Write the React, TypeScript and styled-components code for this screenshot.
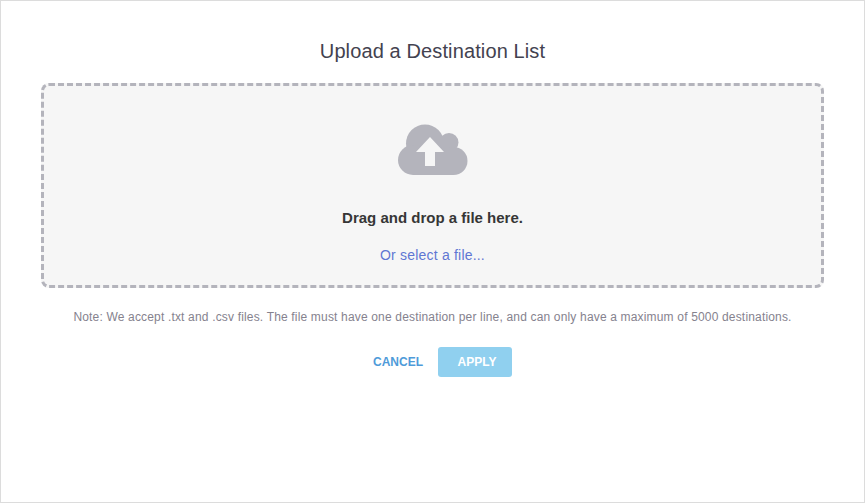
import React from 'react';
import styled, { createGlobalStyle } from 'styled-components';

const GlobalStyle = createGlobalStyle`
  html, body {
    margin: 0;
    padding: 0;
    background: #fff;
    font-family: "Liberation Sans", Arial, sans-serif;
  }
`;

const Modal = styled.div`
  box-sizing: border-box;
  width: 865px;
  height: 503px;
  border: 1px solid #dcdcdc;
  padding: 38px 40px 0;
  display: flex;
  flex-direction: column;
  align-items: center;
  background: #fff;
`;

const Title = styled.h1`
  margin: 0;
  font-size: 20px;
  line-height: 24px;
  font-weight: 400;
  letter-spacing: 0.12px;
  color: #43424f;
`;

const DropZone = styled.div`
  box-sizing: border-box;
  width: 783px;
  height: 205px;
  margin-top: 20px;
  border: 3px dashed #b4b4bc;
  border-radius: 8px;
  background: #f6f6f6;
  padding-top: 38px;
  display: flex;
  flex-direction: column;
  align-items: center;
`;

const CloudIcon = styled.svg`
  display: block;
  width: 70px;
  height: 51px;
`;

const DropText = styled.div`
  margin-top: 34px;
  font-size: 15px;
  line-height: 18px;
  font-weight: 700;
  color: #363636;
`;

const SelectLink = styled.a`
  margin-top: 19px;
  font-size: 14px;
  line-height: 18px;
  letter-spacing: 0.2px;
  color: #5f76d3;
  cursor: pointer;
`;

const Note = styled.p`
  margin: 21px 0 0;
  font-size: 12px;
  line-height: 16px;
  letter-spacing: 0.17px;
  color: #85828e;
`;

const Actions = styled.div`
  margin: 22px 0 0 20px;
  display: flex;
  align-items: center;
  gap: 15px;
`;

const ActionButton = styled.button<{ $primary?: boolean }>`
  box-sizing: border-box;
  width: ${p => (p.$primary ? '74px' : 'auto')};
  height: 30px;
  padding: ${p => (p.$primary ? '0 0 0 4px' : '0')};
  border: 0;
  border-radius: 3px;
  background: ${p => (p.$primary ? '#90d0ef' : 'transparent')};
  color: ${p => (p.$primary ? '#fff' : '#4f9bd9')};
  font-family: inherit;
  font-size: 12px;
  font-weight: 700;
  cursor: pointer;
`;

const App = () => (
  <>
    <GlobalStyle />
    <Modal>
      <Title>Upload a Destination List</Title>
      <DropZone>
        <CloudIcon viewBox="0 0 70 51">
          <g fill="#b4b4bc">
            <circle cx="27" cy="19.500" r="19" />
            <circle cx="51" cy="18.500" r="9.500" />
            <circle cx="15" cy="36" r="15" />
            <circle cx="55.500" cy="37" r="14" />
            <rect x="15" y="24" width="40" height="27" />
          </g>
          <path fill="#f6f6f6" d="M32 13L18 28H27V42H37V28H46Z" />
        </CloudIcon>
        <DropText>Drag and drop a file here.</DropText>
        <SelectLink>Or select a file...</SelectLink>
      </DropZone>
      <Note>
        Note: We accept .txt and .csv files. The file must have one destination per line, and can only have a maximum of 5000 destinations.
      </Note>
      <Actions>
        <ActionButton>CANCEL</ActionButton>
        <ActionButton $primary>APPLY</ActionButton>
      </Actions>
    </Modal>
  </>
);

export default App;
